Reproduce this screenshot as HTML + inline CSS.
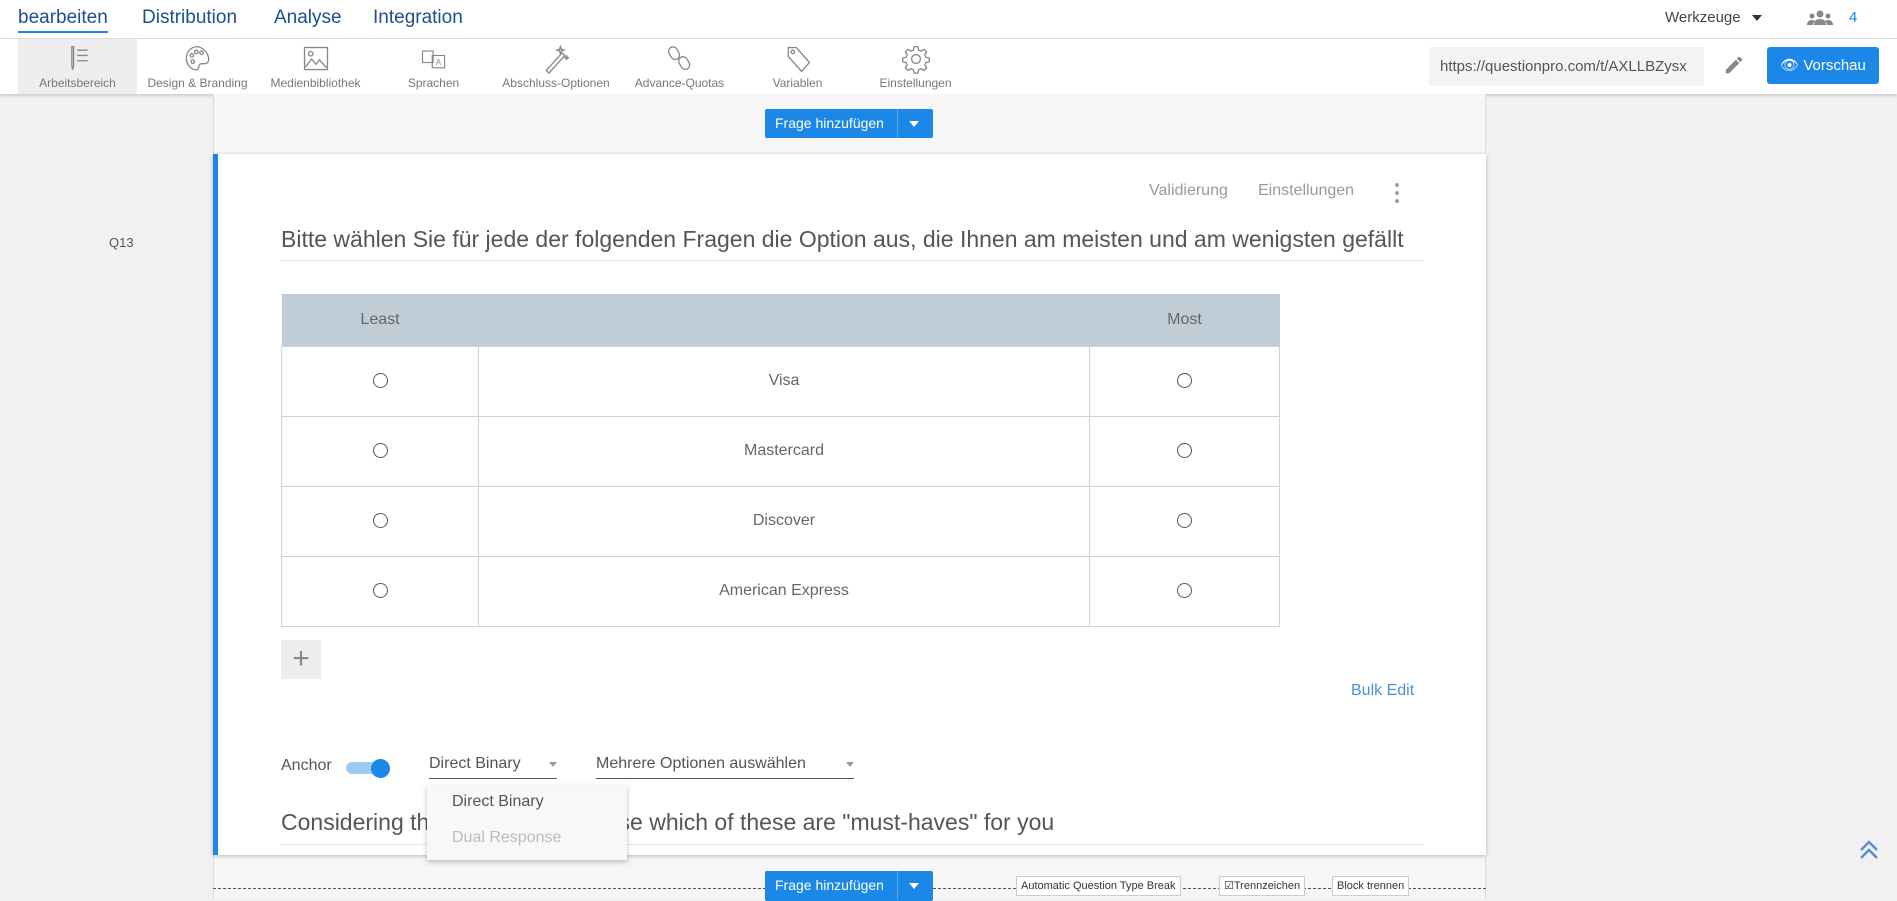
<!DOCTYPE html>
<html><head><meta charset="utf-8"><style>
*{box-sizing:border-box;margin:0;padding:0}
body{width:1897px;height:899px;overflow:hidden;background:#f1f1f1;font-family:"Liberation Sans",sans-serif;color:#545454;position:relative}
.abs{position:absolute}
.top{left:0;top:0;width:1897px;height:39px;background:#fff;border-bottom:1px solid #ddd}
.nav{top:7px;font-size:19px;color:#1c4f91}
.tb{left:0;top:39px;width:1897px;height:55px;background:#fff;box-shadow:0 2px 3px rgba(0,0,0,.15)}
.ti{top:0;height:55px;text-align:center;font-size:12px;color:#777}
.ti svg{display:block;margin:5px auto 2px}
.panel{left:213px;top:94px;width:1273px;height:805px;background:#f6f6f6;border-left:1px solid #ddd;border-right:1px solid #ddd}
.btn{background:#1b87e6;color:#fff;font-size:14px;height:29px;line-height:29px;border-radius:2px}
.card{left:213px;top:154px;width:1273px;height:701px;background:#fff;border-left:5px solid #1b87e6;box-shadow:0 1px 4px rgba(0,0,0,.25)}
table{position:absolute;left:281px;top:294px;border-collapse:collapse;width:999px}
td{border:1px solid #c8d3dc;height:70px;text-align:center;font-size:16px;color:#666}
th{background:#c1cdd6;height:52px;font-weight:normal;font-size:16px;color:#666}
.r{display:inline-block;width:15px;height:15px;border:1.3px solid #555;border-radius:50%;vertical-align:middle}
.sb{font-size:11px;background:#fff;border:1px solid #ccc;height:20px;line-height:18px;padding:0 4px;color:#333}
</style></head><body>
<div class="abs top"></div>
<div class="abs nav" style="left:18px;border-bottom:2px solid #1b87e6;padding-bottom:2px">bearbeiten</div>
<div class="abs nav" style="left:142px">Distribution</div>
<div class="abs nav" style="left:274px">Analyse</div>
<div class="abs nav" style="left:373px">Integration</div>
<div class="abs" style="left:1665px;top:9px;font-size:15px;color:#444">Werkzeuge</div>
<div class="abs" style="left:1752px;top:15px;border:5px solid transparent;border-top:6px solid #333"></div>
<svg class="abs" style="left:1806px;top:10px" width="28" height="16" viewBox="0 0 28 16"><g fill="#888"><circle cx="14" cy="4" r="3.5"/><circle cx="6" cy="6" r="2.5"/><circle cx="22" cy="6" r="2.5"/><path d="M8 15q0-6 6-6t6 6z"/><path d="M1 15q0-5 5-5 2 0 3 1-2 2-2 4z"/><path d="M27 15q0-5-5-5-2 0-3 1 2 2 2 4z"/></g></svg>
<div class="abs" style="left:1849px;top:9px;font-size:15px;color:#1b87e6">4</div>

<div class="abs tb"></div>
<div class="abs ti" style="left:18px;top:39px;width:119px;background:#eee"><svg width="30" height="30" viewBox="0 0 34 34" fill="none" stroke="#888" stroke-width="1.5"><path d="M10 3v22l1 4 1-4V3z"/><path d="M16 7h12M16 13h12M16 19h12"/></svg>Arbeitsbereich</div>
<div class="abs ti" style="left:140px;top:39px;width:115px"><svg width="30" height="30" viewBox="0 0 34 34" fill="none" stroke="#888" stroke-width="1.5"><path d="M17 3C8 3 3 10 4 18c1 8 8 12 12 11 3-1 1-4 3-6s6 1 9-2c3-4 0-15-11-18z"/><circle cx="10" cy="13" r="2"/><circle cx="15" cy="9" r="2"/><circle cx="21" cy="10" r="2"/><circle cx="11" cy="20" r="2"/></svg>Design &amp; Branding</div>
<div class="abs ti" style="left:258px;top:39px;width:115px"><svg width="30" height="30" viewBox="0 0 34 34" fill="none" stroke="#888" stroke-width="1.5"><rect x="4" y="4" width="26" height="25"/><circle cx="11" cy="11" r="2.5"/><path d="M5 26l7-9 5 6 4-5 8 9"/></svg>Medienbibliothek</div>
<div class="abs ti" style="left:376px;top:39px;width:115px"><svg width="30" height="30" viewBox="0 0 34 34" fill="none" stroke="#888" stroke-width="1.3"><rect x="4" y="8" width="12" height="13"/><rect x="15" y="13" width="14" height="14"/><text x="19" y="24" font-size="9" fill="#888" stroke="none">A</text></svg>Sprachen</div>
<div class="abs ti" style="left:496px;top:39px;width:120px"><svg width="30" height="30" viewBox="0 0 34 34" fill="none" stroke="#888" stroke-width="1.5"><path d="M6 30l18-20 3 3L9 33z"/><path d="M22 3l1 3 3 1-3 1-1 3-1-3-3-1 3-1zM29 13l.5 2 2 .5-2 .5-.5 2-.5-2-2-.5 2-.5z"/></svg>Abschluss-Optionen</div>
<div class="abs ti" style="left:622px;top:39px;width:115px"><svg width="30" height="30" viewBox="0 0 34 34" fill="none" stroke="#888" stroke-width="1.5"><rect x="5" y="3" width="10" height="15" rx="5" transform="rotate(-30 10 10)"/><rect x="17" y="14" width="10" height="15" rx="5" transform="rotate(-30 22 22)"/></svg>Advance-Quotas</div>
<div class="abs ti" style="left:740px;top:39px;width:115px"><svg width="30" height="30" viewBox="0 0 34 34" fill="none" stroke="#888" stroke-width="1.5"><path d="M6 4h9l15 17-9 10L6 14z"/><circle cx="11" cy="9" r="2"/></svg>Variablen</div>
<div class="abs ti" style="left:858px;top:39px;width:115px"><svg width="30" height="30" viewBox="0 0 34 34" fill="none" stroke="#888" stroke-width="1.5"><circle cx="17" cy="17" r="5"/><path d="M15 3h4l1 4 3 1 3-2 3 3-2 3 1 3 4 1v4l-4 1-1 3 2 3-3 3-3-2-3 1-1 4h-4l-1-4-3-1-3 2-3-3 2-3-1-3-4-1v-4l4-1 1-3-2-3 3-3 3 2 3-1z"/></svg>Einstellungen</div>
<div class="abs" style="left:1429px;top:47px;width:275px;height:39px;background:#f3f3f3;font-size:15px;line-height:39px;padding-left:11px;color:#555;overflow:hidden;white-space:nowrap">https://questionpro.com/t/AXLLBZysx</div>
<svg class="abs" style="left:1723px;top:54px" width="22" height="22" viewBox="0 0 24 24"><path fill="#888" d="M3 17.25V21h3.75L17.81 9.94l-3.75-3.75zM20.71 7.04a1 1 0 000-1.41l-2.34-2.34a1 1 0 00-1.41 0l-1.83 1.83 3.75 3.75z"/></svg>
<div class="abs btn" style="left:1767px;top:47px;width:112px;height:37px;line-height:37px;text-align:center;font-size:15px;border-radius:3px">&#128065; Vorschau</div>

<div class="abs panel"></div>
<div class="abs btn" style="left:765px;top:109px;width:168px"><span style="padding-left:10px">Frage hinzufügen</span><span style="position:absolute;left:132px;top:0;height:29px;border-left:1px solid #5aa8ee"></span><span style="position:absolute;left:144px;top:12px;border:5px solid transparent;border-top:6px solid #fff"></span></div>
<div class="abs" style="left:109px;top:235px;font-size:13px;color:#555">Q13</div>
<div class="abs card"></div>
<div class="abs" style="left:1149px;top:182px;font-size:16px;color:#999">Validierung</div>
<div class="abs" style="left:1258px;top:182px;font-size:16px;color:#999">Einstellungen</div>
<div class="abs" style="left:1395px;top:181px;width:4px;height:22px;background:radial-gradient(circle,#999 1.8px,transparent 2px) 0 0/4px 8px"></div>
<div class="abs" style="left:281px;top:226px;font-size:23px;color:#555;white-space:nowrap;letter-spacing:0">Bitte wählen Sie für jede der folgenden Fragen die Option aus, die Ihnen am meisten und am wenigsten gefällt</div>
<div class="abs" style="left:281px;top:260px;width:1142px;height:1px;background:#e5e5e5"></div>
<table>
<tr><th style="width:197px">Least</th><th></th><th style="width:190px">Most</th></tr>
<tr><td><span class="r"></span></td><td>Visa</td><td><span class="r"></span></td></tr>
<tr><td><span class="r"></span></td><td>Mastercard</td><td><span class="r"></span></td></tr>
<tr><td><span class="r"></span></td><td>Discover</td><td><span class="r"></span></td></tr>
<tr><td><span class="r"></span></td><td>American Express</td><td><span class="r"></span></td></tr>
</table>
<div class="abs" style="left:281px;top:640px;width:40px;height:39px;background:#eee;text-align:center;font-size:30px;line-height:37px;color:#888;font-weight:300">+</div>
<div class="abs" style="left:1351px;top:682px;font-size:16px;color:#4a90d9">Bulk Edit</div>
<div class="abs" style="left:281px;top:757px;font-size:16px;color:#555">Anchor</div>
<div class="abs" style="left:346px;top:762px;width:38px;height:12px;border-radius:6px;background:#9ccbf2"></div>
<div class="abs" style="left:371px;top:759px;width:19px;height:19px;border-radius:50%;background:#1b87e6"></div>
<div class="abs" style="left:429px;top:755px;width:128px;height:24px;border-bottom:1.5px solid #555;font-size:16px;color:#555">Direct Binary<span style="position:absolute;right:0;top:7px;border:4px solid transparent;border-top:5px solid #999"></span></div>
<div class="abs" style="left:596px;top:755px;width:258px;height:24px;border-bottom:1.5px solid #555;font-size:16px;color:#555">Mehrere Optionen auswählen<span style="position:absolute;right:0;top:7px;border:4px solid transparent;border-top:5px solid #999"></span></div>
<div class="abs" style="left:281px;top:809px;font-size:23px;color:#555;white-space:nowrap">Considering these features, choose which of these are "must-haves" for you</div>
<div class="abs" style="left:281px;top:844px;width:1142px;height:1px;background:#e5e5e5"></div>
<div class="abs" style="left:427px;top:785px;width:200px;height:75px;background:#f8f8f8;box-shadow:0 2px 5px rgba(0,0,0,.25)"><div style="position:absolute;left:25px;top:8px;font-size:16px;color:#555">Direct Binary</div><div style="position:absolute;left:25px;top:44px;font-size:16px;color:#bbb">Dual Response</div></div>

<div class="abs" style="left:213px;top:888px;width:1273px;border-top:1px dashed #555"></div>
<div class="abs btn" style="left:765px;top:871px;width:168px;height:30px"><span style="padding-left:10px">Frage hinzufügen</span><span style="position:absolute;left:132px;top:0;height:29px;border-left:1px solid #5aa8ee"></span><span style="position:absolute;left:144px;top:12px;border:5px solid transparent;border-top:6px solid #fff"></span></div>
<div class="abs sb" style="left:1016px;top:876px">Automatic Question Type Break</div>
<div class="abs sb" style="left:1219px;top:876px">&#9745;Trennzeichen</div>
<div class="abs sb" style="left:1332px;top:876px">Block trennen</div>
<svg class="abs" style="left:1857px;top:838px" width="24" height="24" viewBox="0 0 24 24" fill="none" stroke="#5b8fc9" stroke-width="2.5"><path d="M4 12l8-8 8 8M4 20l8-8 8 8"/></svg>
</body></html>
